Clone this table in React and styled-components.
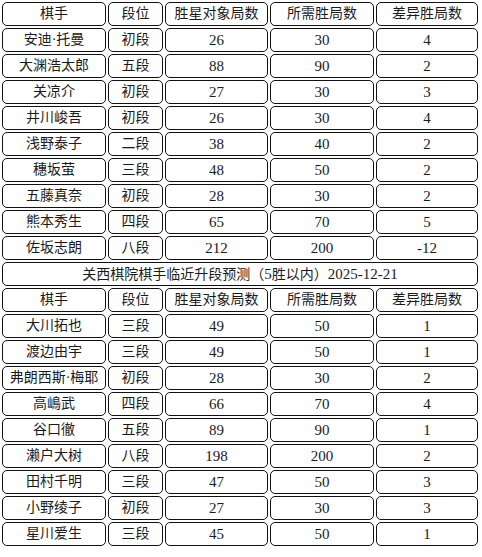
import React from "react";
import styled, { createGlobalStyle } from "styled-components";

const GlobalStyle = createGlobalStyle`
  html, body {
    margin: 0;
    padding: 0;
    background: #fff;
  }
`;

const Table = styled.table`
  width: 480px;
  border-collapse: separate;
  border-spacing: 2px;
  table-layout: fixed;
  font-family: "Liberation Serif", "Noto Sans CJK SC", serif;
  font-size: 14px;
  color: #1a1a1a;
`;

const Cell = styled.td`
  height: 24px;
  box-sizing: border-box;
  padding: 0;
  border: 1px solid #111;
  border-radius: 5px;
  text-align: center;
  vertical-align: middle;
  white-space: nowrap;
  line-height: 20px;
  overflow: hidden;
`;

const Num = styled.span`
  font-size: 15px;
`;

const widths = [104, 55, 103, 104, 102];
const header = ["棋手", "段位", "胜星对象局数", "所需胜局数", "差异胜局数"];

const kansai1 = [
  ["安迪·托曼", "初段", 26, 30, 4],
  ["大渊浩太郎", "五段", 88, 90, 2],
  ["关凉介", "初段", 27, 30, 3],
  ["井川峻吾", "初段", 26, 30, 4],
  ["浅野泰子", "二段", 38, 40, 2],
  ["穗坂萤", "三段", 48, 50, 2],
  ["五藤真奈", "初段", 28, 30, 2],
  ["熊本秀生", "四段", 65, 70, 5],
  ["佐坂志朗", "八段", 212, 200, -12],
];

const kansai2 = [
  ["大川拓也", "三段", 49, 50, 1],
  ["渡边由宇", "三段", 49, 50, 1],
  ["弗朗西斯·梅耶", "初段", 28, 30, 2],
  ["高嶋武", "四段", 66, 70, 4],
  ["谷口徹", "五段", 89, 90, 1],
  ["濑户大树", "八段", 198, 200, 2],
  ["田村千明", "三段", 47, 50, 3],
  ["小野绫子", "初段", 27, 30, 3],
  ["星川爱生", "三段", 45, 50, 1],
];

const Row = ({ cells }) => (
  <tr>
    {cells.map((c, i) => (
      <Cell key={i}>{typeof c === "number" ? <Num>{c}</Num> : c}</Cell>
    ))}
  </tr>
);

export default function App() {
  return (
    <>
      <GlobalStyle />
      <Table>
        <colgroup>
          {widths.map((w, i) => (
            <col key={i} style={{ width: w }} />
          ))}
        </colgroup>
        <tbody>
          <Row cells={header} />
          {kansai1.map((r, i) => (
            <Row key={"a" + i} cells={r} />
          ))}
          <tr>
            <Cell colSpan={5}>
              关西棋院棋手临近升段预测（<Num>5</Num>胜以内）<Num>2025-12-21</Num>
            </Cell>
          </tr>
          <Row cells={header} />
          {kansai2.map((r, i) => (
            <Row key={"b" + i} cells={r} />
          ))}
        </tbody>
      </Table>
    </>
  );
}
